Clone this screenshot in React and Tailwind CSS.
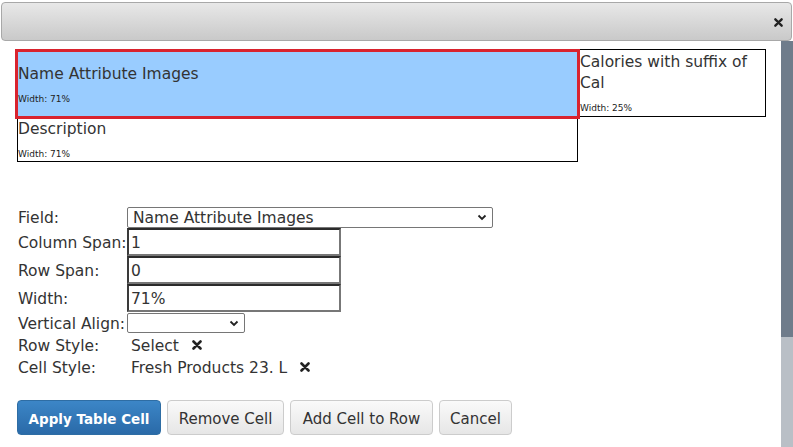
const XMark = ({ size = 9, className = "" }) => (
  <svg width={size} height={size} viewBox="0 0 10 10" className={className}>
    <path d="M1.5 1.5 L8.5 8.5 M8.5 1.5 L1.5 8.5" stroke="#222" strokeWidth="2.6" strokeLinecap="round" />
  </svg>
);

const Chevron = () => (
  <svg width="10" height="7" viewBox="0 0 10 7">
    <path d="M1.5 1.5 L5 5 L8.5 1.5" fill="none" stroke="#222" strokeWidth="1.8" />
  </svg>
);

const inputCls =
  "w-[214px] h-[28px] border-2 border-t-[#2b2b2b] border-l-[#3a3a3a] border-r-[#777] border-b-[#777] flex items-center pl-[2px] pt-[4px] bg-white";

const Cell = ({ title, width }) => (
  <>
    <div className="text-[15.5px] leading-[21px]">{title}</div>
    <div className="text-[9px] leading-[12px] mt-[8px] text-[#222]">Width: {width}</div>
  </>
);

export default function App() {
  return (
    <div className="w-[793px] h-[447px] overflow-hidden bg-white text-[#333] font-['DejaVu_Sans',sans-serif]">
      <div className="pt-[2px] px-[1px]">
        <div className="h-[39px] rounded-[4px] border border-[#a8a8a8] bg-gradient-to-b from-[#e8e8e8] to-[#c9c9c9] flex items-center justify-end pr-[8px] pt-[2px]">
          <XMark size={9} />
        </div>
      </div>
      <div className="flex h-[406px]">
        <div className="flex-1 pt-[8px]">
          <div className="flex items-start ml-[15px]">
            <div className="w-[565px] h-[70px] border-[3px] border-[#d9232e] bg-[#99ccff] flex flex-col justify-center">
              <Cell title="Name Attribute Images" width="71%" />
            </div>
            <div className="w-[186px] h-[68px] border-y border-r border-black flex flex-col justify-center">
              <Cell
                title={
                  <>
                    Calories with suffix of
                    <br />
                    Cal
                  </>
                }
                width="25%"
              />
            </div>
          </div>
          <div className="ml-[17px] w-[561px] h-[43px] border-x border-b border-black">
            <Cell title="Description" width="71%" />
          </div>

          <div className="ml-[18px] mt-[44px] text-[15.5px]">
            <div className="flex items-center h-[22px]">
              <div className="w-[109px] pt-[4px]">Field:</div>
              <div className="w-[366px] h-[21px] border border-[#767676] rounded-[2px] flex items-center justify-between pl-[5px] pr-[5px]">
                <span className="pt-[3px]">Name Attribute Images</span>
                <Chevron />
              </div>
            </div>
            <div className="flex items-center h-[28px]">
              <div className="w-[109px] pt-[4px]">Column Span:</div>
              <div className={inputCls}>1</div>
            </div>
            <div className="flex items-center h-[28px]">
              <div className="w-[109px] pt-[4px]">Row Span:</div>
              <div className={inputCls}>0</div>
            </div>
            <div className="flex items-center h-[28px]">
              <div className="w-[109px] pt-[4px]">Width:</div>
              <div className={inputCls}>71%</div>
            </div>
            <div className="flex items-center h-[22px]">
              <div className="w-[109px] pt-[4px]">Vertical Align:</div>
              <div className="w-[118px] h-[20px] border border-[#767676] rounded-[2px] flex items-center justify-end pr-[5px]">
                <Chevron />
              </div>
            </div>
            <div className="flex items-center h-[22px]">
              <div className="w-[113px] pt-[4px]">Row Style:</div>
              <span className="pt-[4px]">Select</span>
              <XMark size={10} className="ml-[13px]" />
            </div>
            <div className="flex items-center h-[22px]">
              <div className="w-[113px] pt-[4px]">Cell Style:</div>
              <span className="pt-[4px]">Fresh Products 23. L</span>
              <XMark size={10} className="ml-[13px]" />
            </div>
          </div>

          <div className="flex gap-[6px] ml-[17px] mt-[22px] text-[15px]">
            <button className="h-[35px] w-[144px] pt-[3px] rounded-[4px] border border-[#2e6da4] bg-gradient-to-b from-[#3c86c7] to-[#2a6aa8] text-white font-bold text-[13.5px]">
              Apply Table Cell
            </button>
            <button className="h-[35px] w-[117px] pt-[3px] rounded-[4px] border border-[#ccc] bg-gradient-to-b from-[#fafafa] to-[#e6e6e6] text-[#333]">
              Remove Cell
            </button>
            <button className="h-[35px] w-[143px] pt-[3px] rounded-[4px] border border-[#ccc] bg-gradient-to-b from-[#fafafa] to-[#e6e6e6] text-[#333]">
              Add Cell to Row
            </button>
            <button className="h-[35px] w-[73px] pt-[3px] rounded-[4px] border border-[#ccc] bg-gradient-to-b from-[#fafafa] to-[#e6e6e6] text-[#333]">
              Cancel
            </button>
          </div>
        </div>
        <div className="w-[12px] flex flex-col bg-[#b9bfc6]">
          <div className="h-[296px] bg-[#6f7c8b]" />
        </div>
      </div>
    </div>
  );
}
